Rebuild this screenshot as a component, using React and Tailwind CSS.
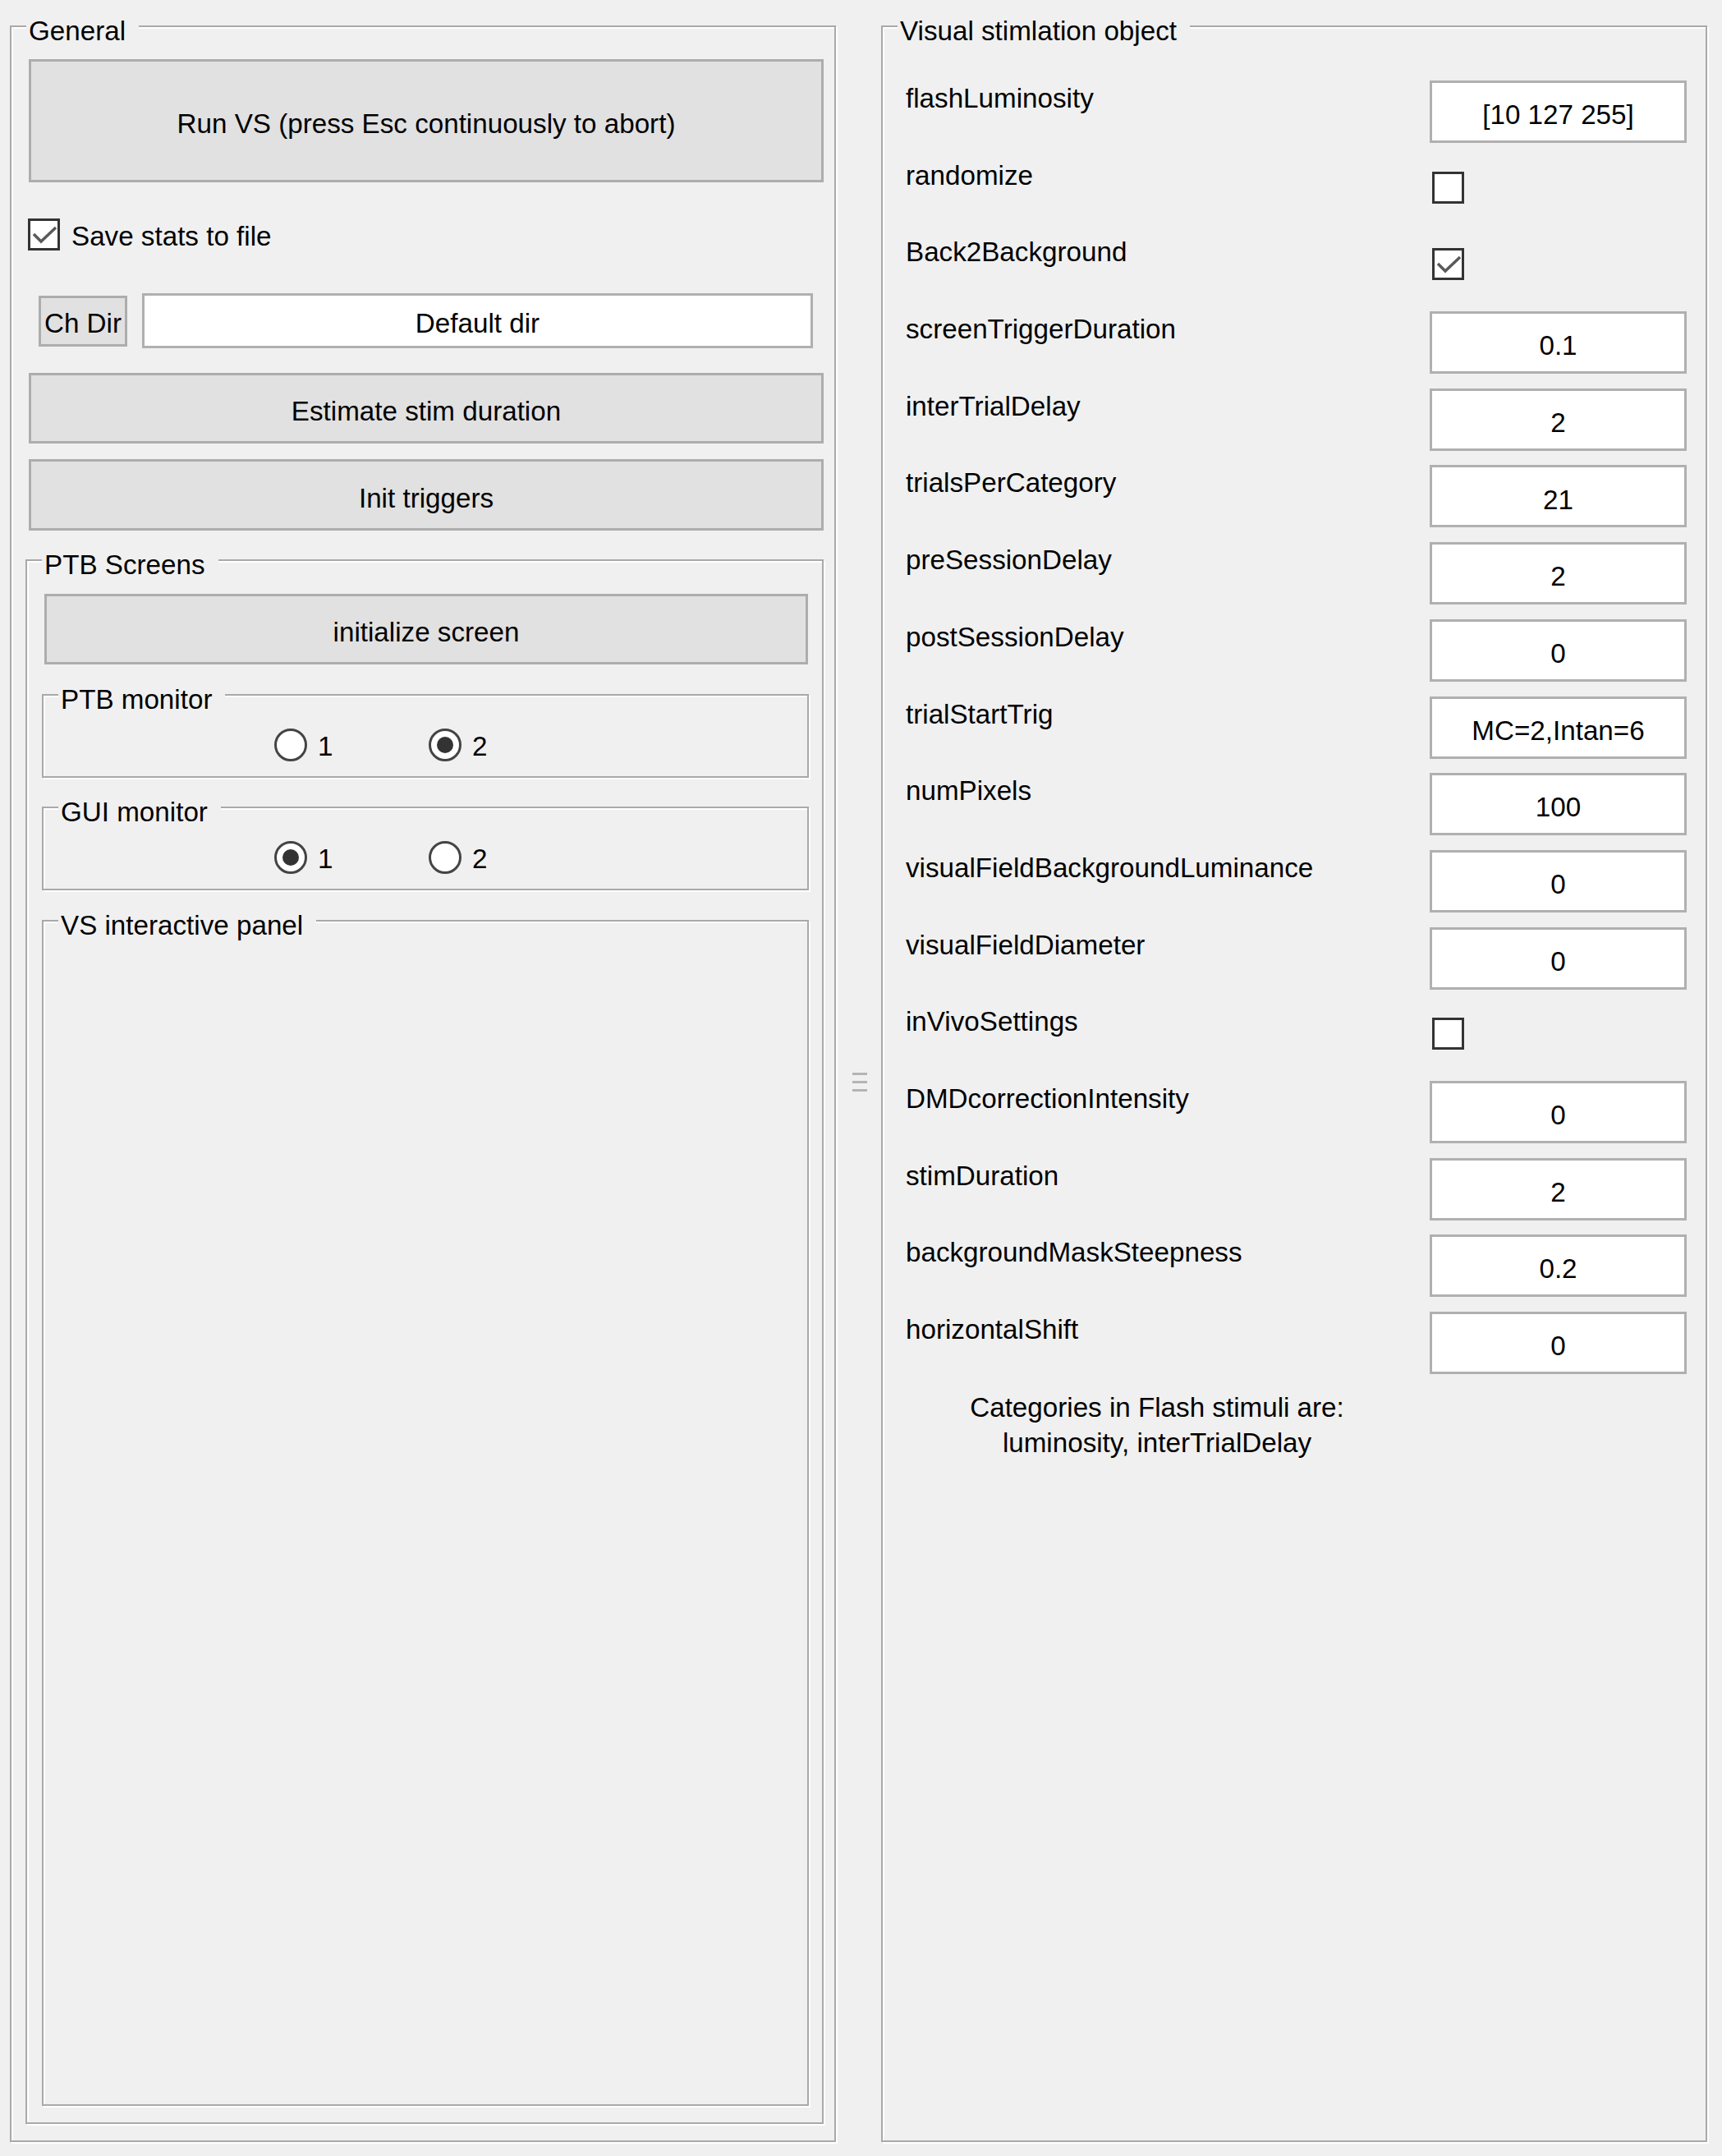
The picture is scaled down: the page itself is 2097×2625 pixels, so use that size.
import React from 'react'

const ROWS = [
  { label: 'flashLuminosity', value: '[10 127 255]' },
  { label: 'randomize', check: false },
  { label: 'Back2Background', check: true },
  { label: 'screenTriggerDuration', value: '0.1' },
  { label: 'interTrialDelay', value: '2' },
  { label: 'trialsPerCategory', value: '21' },
  { label: 'preSessionDelay', value: '2' },
  { label: 'postSessionDelay', value: '0' },
  { label: 'trialStartTrig', value: 'MC=2,Intan=6' },
  { label: 'numPixels', value: '100' },
  { label: 'visualFieldBackgroundLuminance', value: '0' },
  { label: 'visualFieldDiameter', value: '0' },
  { label: 'inVivoSettings', check: false },
  { label: 'DMDcorrectionIntensity', value: '0' },
  { label: 'stimDuration', value: '2' },
  { label: 'backgroundMaskSteepness', value: '0.2' },
  { label: 'horizontalShift', value: '0' },
]

// etched group box, title sits on the top line
function Frame({ title, className, children }) {
  return (
    <div className={`relative shrink-0 border-2 border-[#a9a9a9] shadow-[inset_2px_2px_0_#ffffff,2px_2px_0_#ffffff] ${className}`}>
      <span className="absolute left-[18px] -top-[14px] bg-[#f0f0f0] pl-[3px] pr-[16px] leading-[38px] whitespace-nowrap">
        {title}
      </span>
      <div className="flex flex-col items-start">{children}</div>
    </div>
  )
}

function Button({ className, children }) {
  return (
    <div className={`flex items-center justify-center border-[3px] border-[#adadad] bg-[#e1e1e1] pt-[8px] whitespace-nowrap ${className}`}>
      {children}
    </div>
  )
}

function CheckBox({ checked, className }) {
  return (
    <div className={`w-[39px] h-[39px] shrink-0 border-[3px] border-[#333333] bg-white ${className}`}>
      {checked && (
        <svg viewBox="0 0 33 33" className="w-full h-full">
          <polyline points="4,16 13,25 31,8" fill="none" stroke="#5a5a5a" strokeWidth="3.5" />
        </svg>
      )}
    </div>
  )
}

function Radio({ on, label }) {
  return (
    <div className="w-[188px] h-[40px] flex items-center gap-[13px]">
      <div className="w-[40px] h-[40px] shrink-0 rounded-full border-[3px] border-[#444444] bg-white flex items-center justify-center">
        {on && <div className="w-[20px] h-[20px] rounded-full bg-[#333333]" />}
      </div>
      <span className="leading-[38px] pt-[4px]">{label}</span>
    </div>
  )
}

function Field({ value }) {
  return (
    <div className="mt-[10px] w-[313px] h-[76px] shrink-0 border-[3px] border-[#b0b0b0] bg-white flex items-center justify-center pt-[8px] whitespace-nowrap">
      {value}
    </div>
  )
}

export default function App() {
  return (
    <div className="flex w-[2097px] h-[2625px] bg-[#f0f0f0] pl-[12px] pt-[31px] text-black text-[33.2px] font-['Liberation_Sans',Arial,sans-serif] overflow-hidden">
      {/* ===== General ===== */}
      <Frame title="General" className="w-[1006px] h-[2577px]">
        <Button className="mt-[39px] ml-[21px] w-[968px] h-[150px]">Run VS (press Esc continuously to abort)</Button>

        <div className="mt-[44px] ml-[20px] h-[39px] flex items-center gap-[14px]">
          <CheckBox checked />
          <span className="leading-[38px] pt-[4px]">Save stats to file</span>
        </div>

        <div className="mt-[52px] ml-[33px] h-[67px] flex items-center gap-[18px]">
          <div className="w-[108px] h-[62px] border-[3px] border-[#adadad] bg-[#e1e1e1] flex items-center justify-center pt-[6px] whitespace-nowrap overflow-hidden">
            Ch Dir
          </div>
          <div className="w-[817px] h-[67px] border-[3px] border-[#b0b0b0] bg-white flex items-center justify-center pt-[6px]">
            Default dir
          </div>
        </div>

        <Button className="mt-[30px] ml-[21px] w-[968px] h-[86px]">Estimate stim duration</Button>
        <Button className="mt-[19px] ml-[21px] w-[968px] h-[87px]">Init triggers</Button>

        <Frame title="PTB Screens" className="mt-[35px] ml-[17px] w-[972px] h-[1905px]">
          <Button className="mt-[40px] ml-[21px] w-[930px] h-[86px]">initialize screen</Button>

          <Frame title="PTB monitor" className="mt-[36px] ml-[18px] w-[934px] h-[102px]">
            <div className="mt-[40px] ml-[281px] flex">
              <Radio label="1" />
              <Radio label="2" on />
            </div>
          </Frame>

          <Frame title="GUI monitor" className="mt-[35px] ml-[18px] w-[934px] h-[102px]">
            <div className="mt-[40px] ml-[281px] flex">
              <Radio label="1" on />
              <Radio label="2" />
            </div>
          </Frame>

          <Frame title="VS interactive panel" className="mt-[36px] ml-[18px] w-[934px] h-[1444px]" />
        </Frame>
      </Frame>

      {/* ===== splitter handle ===== */}
      <div className="w-[55px] shrink-0 pl-[3px] flex flex-col items-center justify-center gap-[7px] pb-[22px]">
        <div className="w-[18px] h-[3px] bg-[#b4b4b4]" />
        <div className="w-[18px] h-[3px] bg-[#b4b4b4]" />
        <div className="w-[18px] h-[3px] bg-[#b4b4b4]" />
      </div>

      {/* ===== Visual stimulation object ===== */}
      <Frame title="Visual stimlation object" className="w-[1006px] h-[2577px]">
        <div className="mt-[55px] flex flex-col">
          {ROWS.map((r) => (
            <div key={r.label} className="h-[93.7px] flex items-start">
              <span className="ml-[28px] mt-[13px] w-[638px] shrink-0 leading-[38px] whitespace-nowrap">{r.label}</span>
              {r.value !== undefined ? (
                <Field value={r.value} />
              ) : (
                <CheckBox checked={r.check} className="mt-[27px] ml-[3px]" />
              )}
            </div>
          ))}
        </div>
        <div className="mt-[11px] ml-[28px] w-[612px] text-center leading-[43px]">
          Categories in Flash stimuli are:
          <br />
          luminosity, interTrialDelay
        </div>
      </Frame>
    </div>
  )
}
